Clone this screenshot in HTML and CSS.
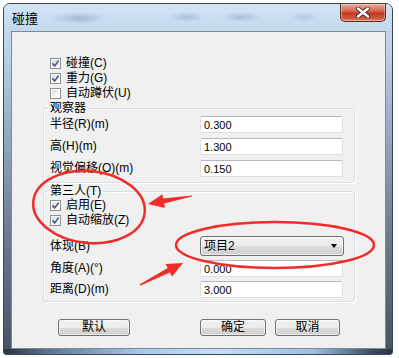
FILE: index.html
```html
<!DOCTYPE html>
<html lang="zh-CN">

<head>
    <meta charset="UTF-8">
    <title>碰撞</title>
    <link rel="stylesheet" href="styles.css">
</head>

<body>
    <div class="window">
        <div class="titlebar">
            <span class="title">碰撞</span>
            <button class="close" aria-label="close">
                <svg width="16" height="11" viewBox="0 0 16 11">
                    <path d="M3 1.5 L13 9.5 M13 1.5 L3 9.5" stroke="#3a2b2b" stroke-width="4.2" stroke-linecap="round" fill="none"/>
                    <path d="M3 1.5 L13 9.5 M13 1.5 L3 9.5" stroke="#fff" stroke-width="2.4" stroke-linecap="round" fill="none"/>
                </svg>
            </button>
        </div>
        <div class="client">
            <div class="checks top-checks">
                <label class="check"><span class="cb on"></span>碰撞(C)</label>
                <label class="check"><span class="cb on"></span>重力(G)</label>
                <label class="check"><span class="cb"></span>自动蹲伏(U)</label>
            </div>
            <fieldset class="group group-view">
                <legend>观察器</legend>
                <div class="rows">
                    <div class="field"><label>半径(R)(m)</label><input type="text" value="0.300"></div>
                    <div class="field"><label>高(H)(m)</label><input type="text" value="1.300"></div>
                    <div class="field"><label>视觉偏移(O)(m)</label><input type="text" value="0.150"></div>
                </div>
            </fieldset>
            <fieldset class="group group-third">
                <legend>第三人(T)</legend>
                <div class="checks">
                    <label class="check"><span class="cb on"></span>启用(E)</label>
                    <label class="check"><span class="cb on"></span>自动缩放(Z)</label>
                </div>
                <div class="rows rows-third">
                    <div class="field field-combo"><label>体现(B)</label><div class="combo"><span>项目2</span><i class="arrow"></i></div></div>
                    <div class="field"><label>角度(A)(°)</label><input type="text" value="0.000"></div>
                    <div class="field"><label>距离(D)(m)</label><input type="text" value="3.000"></div>
                </div>
            </fieldset>
            <div class="buttons">
                <button class="btn btn-default">默认</button>
                <button class="btn btn-ok">确定</button>
                <button class="btn btn-cancel">取消</button>
            </div>
        </div>
        <div class="frame-bottom"></div>
    </div>

    <!-- red annotation marks drawn over the dialog -->
    <svg class="marks" width="399" height="358" viewBox="0 0 399 358">
        <ellipse cx="89" cy="207" rx="56" ry="36" transform="rotate(6 89 207)" fill="none" stroke="#f22b2b" stroke-width="2.5"/>
        <ellipse cx="275" cy="245" rx="99" ry="23" fill="none" stroke="#f22b2b" stroke-width="2.5"/>
        <polygon points="148,204 165,208 164.1,203.6 192,196.6 192,195.4 163.3,198.6 162.4,194.2" fill="#f22b2b"/>
        <polygon points="183,263 172,276.5 169.9,272.5 140.5,285.5 139.5,284.5 167.7,268.1 165.6,264.1" fill="#f22b2b"/>
    </svg>
</body>

</html>
```

FILE: styles.css
```css
body {
    margin: 0;
    padding: 3px 0 0 3px;
    position: relative;
    width: 399px;
    height: 358px;
    box-sizing: border-box;
    overflow: hidden;
    background-color: #fff;
    font-family: "Liberation Sans", "Noto Sans CJK SC", sans-serif;
    font-size: 12px;
    color: #000;
}

.window {
    width: 390px;
    height: 352px;
    box-sizing: border-box;
    border: 1px solid #3b4655;
    border-radius: 7px 7px 3px 3px;
    background: linear-gradient(180deg, #c9dcf0 0%, #bfd3e8 12%, #98adc3 35%, #6c7d91 65%, #465365 100%);
    display: flex;
    flex-direction: column;
    overflow: hidden;
}

.titlebar {
    height: 27px;
    flex: none;
    display: flex;
    justify-content: space-between;
    align-items: flex-start;
    padding: 0 6px 0 8px;
    background:
        radial-gradient(ellipse 28px 6px at 75px 14px, rgba(90, 120, 160, 0.35), transparent),
        radial-gradient(ellipse 18px 5px at 182px 13px, rgba(90, 120, 160, 0.3), transparent),
        radial-gradient(ellipse 20px 5px at 237px 13px, rgba(90, 120, 160, 0.3), transparent),
        radial-gradient(ellipse 16px 5px at 300px 13px, rgba(120, 150, 180, 0.25), transparent),
        linear-gradient(180deg, #d3e4f5 0%, #c4d8ed 100%);
}

.title {
    font-size: 13px;
    line-height: 16px;
    margin-top: 7px;
    color: #000;
}

.close {
    width: 46px;
    height: 18px;
    padding: 0;
    border: 1px solid #5a2d25;
    border-top: none;
    border-radius: 0 0 5px 5px;
    background: linear-gradient(180deg, #e9ab9b 0%, #d76a55 40%, #c23a22 55%, #cf5a40 85%, #e08a70 100%);
    box-shadow: inset 0 0 0 1px rgba(255, 255, 255, 0.35);
    display: flex;
    align-items: center;
    justify-content: center;
}

.client {
    height: 318px;
    flex: none;
    box-sizing: border-box;
    margin: 0 6px 0 7px;
    padding: 24px 30px 0 31px;
    border: 1px solid #7d8a99;
    background-color: #f0f0f0;
}

.frame-bottom {
    height: 5px;
    flex: none;
    background: linear-gradient(90deg, #2b3442 0%, #5f7891 12%, #a9c9e8 35%, #c8def3 55%, #9dbfe0 80%, #3b4a5b 95%, #2b3442 100%);
}

.checks {
    display: flex;
    flex-direction: column;
}

.top-checks {
    padding-left: 7px;
}

.check {
    height: 15px;
    display: flex;
    align-items: center;
    gap: 5px;
    line-height: 15px;
}

.cb {
    width: 11px;
    height: 11px;
    box-sizing: border-box;
    border: 1px solid #8e8f8f;
    background: linear-gradient(135deg, #d8d8d8 0%, #f4f4f4 60%, #fff 100%);
    box-shadow: inset 0 0 0 1px #fff;
    flex: none;
}

.cb.on {
    background:
        url("data:image/svg+xml,%3Csvg xmlns='http://www.w3.org/2000/svg' width='9' height='9' viewBox='0 0 9 9'%3E%3Cpath d='M1.3 4.4 L3.6 6.9 L7.8 1.4' stroke='%234b5f8c' stroke-width='1.7' fill='none'/%3E%3C/svg%3E") center / 9px 9px no-repeat,
        linear-gradient(135deg, #d8d8d8 0%, #f4f4f4 60%, #fff 100%);
}

.group {
    margin: 0;
    border: 1px solid #d5dfe5;
    border-radius: 3px;
    box-shadow: inset 1px 1px 0 #fff, 1px 1px 0 #fff;
}

.group legend {
    padding: 0 2px;
    margin-left: -2px;
    line-height: 14px;
}

.group-view {
    padding: 1px 10px 5px 6px;
}

.group-third {
    margin-top: 1px;
    padding: 0 10px 3px 6px;
}

.rows {
    display: flex;
    flex-direction: column;
    gap: 5px;
}

.rows-third {
    gap: 4px;
    margin-top: 8px;
}

.field {
    height: 17px;
    display: flex;
    align-items: center;
}

.field label {
    width: 150px;
    flex: none;
    line-height: 17px;
}

.field input {
    width: 143px;
    height: 17px;
    box-sizing: border-box;
    margin: 0;
    padding: 0 3px;
    border: 1px solid #dcdfe4;
    border-top-color: #b5b8be;
    border-radius: 2px;
    background-color: #fff;
    font-family: "Liberation Sans", sans-serif;
    font-size: 11px;
    color: #000;
}

.field-combo {
    height: 20px;
}

.combo {
    width: 144px;
    height: 20px;
    box-sizing: border-box;
    padding: 0 6px 0 3px;
    border: 1px solid #707070;
    border-radius: 3px;
    background: linear-gradient(180deg, #f2f2f2 0%, #ebebeb 50%, #dddddd 51%, #cfcfcf 100%);
    box-shadow: inset 0 0 0 1px rgba(255, 255, 255, 0.6);
    display: flex;
    align-items: center;
    justify-content: space-between;
    line-height: 18px;
}

.arrow {
    width: 0;
    height: 0;
    border-left: 3.5px solid transparent;
    border-right: 3.5px solid transparent;
    border-top: 4px solid #000;
}

.buttons {
    display: flex;
    margin-top: 17px;
    padding-left: 15px;
}

.btn {
    height: 17px;
    box-sizing: border-box;
    padding: 0;
    border: 1px solid #707070;
    border-radius: 3px;
    background: linear-gradient(180deg, #f2f2f2 0%, #ebebeb 50%, #dddddd 51%, #cfcfcf 100%);
    box-shadow: inset 0 0 0 1px rgba(255, 255, 255, 0.6);
    font-family: inherit;
    font-size: 12px;
    line-height: 15px;
    color: #000;
}

.btn-default {
    width: 72px;
}

.btn-ok {
    width: 66px;
    margin-left: 70px;
}

.btn-cancel {
    width: 65px;
    margin-left: 9px;
}

.marks {
    position: absolute;
    top: 0;
    left: 0;
    pointer-events: none;
}
```
